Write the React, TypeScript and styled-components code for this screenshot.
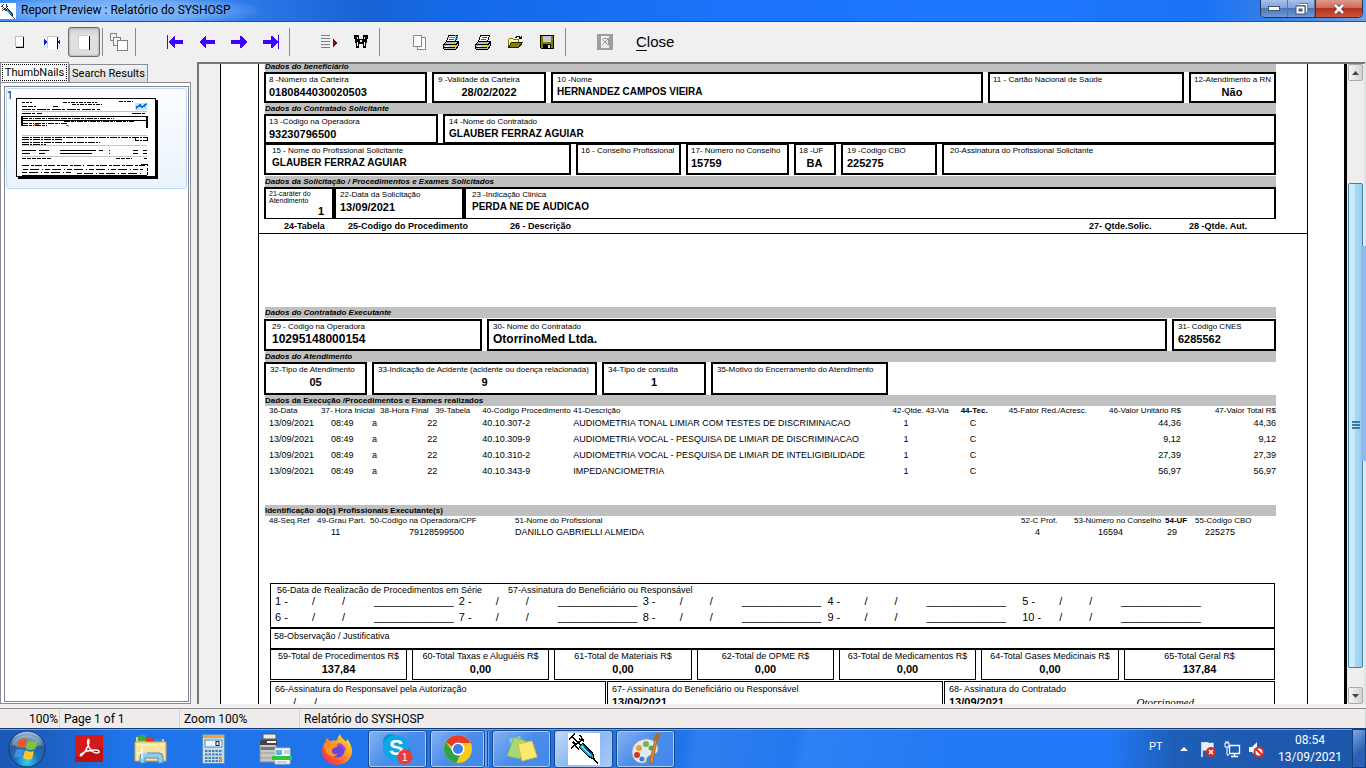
import React from "react";
import styled, { createGlobalStyle, css } from "styled-components";

const ui = `Roboto, "Open Sans", sans-serif`;
const print = `"Liberation Sans", Arial, sans-serif`;

const GlobalStyle = createGlobalStyle`
  * { box-sizing: border-box; }
  body { margin: 0; overflow: hidden; font-family: ${ui}; font-size: 12px; color: #000; }
  button { font-family: inherit; color: inherit; padding: 0; margin: 0; border: 0; background: none; }
  svg { display: block; flex: none; }
`;

/* ---------- window ---------- */

const Desktop = styled.div`
  display: flex;
  flex-direction: column;
  height: 100vh;
  background: #f0f0f0;
`;

const TitleBar = styled.header`
  display: flex;
  flex: none;
  height: 22px;
  background:
    radial-gradient(ellipse 150px 18px at 116px 11px, #8fc0fb 0%, #7db4f9cc 60%, #7db4f900 100%),
    linear-gradient(90deg, #3384f0 0%, #2e7bea 17%, #1763d4 27%, #1569e8 33%, #1b74fb 55%, #1d77fd 75%, #1a72f5 88%, #3f85e4 95%, #6ea0e0 100%);
  border-bottom: 1px solid #24509a;
`;

const AppIcon = styled.span`
  margin-top: 3px;
  width: 16px;
  height: 16px;
  background: #fff;
`;

const WindowTitle = styled.h1`
  flex: 1;
  margin: 0;
  padding-left: 5px;
  font-size: 12px;
  font-weight: 400;
  line-height: 21px;
`;

const Caption = styled.div`
  display: flex;
  height: 18px;
  margin-right: 3px;
  border: 1px solid #1c3563;
  border-top: 0;
  border-radius: 0 0 5px 5px;
  overflow: hidden;
`;

const CaptionButton = styled.button<{ $close?: boolean }>`
  display: flex;
  align-items: center;
  justify-content: center;
  width: ${(p) => (p.$close ? 47 : 27)}px;
  border-left: ${(p) => (p.$close ? 1 : 0)}px solid #1c3563;
  border-right: ${(p) => (p.$close ? 0 : 1)}px solid #5472a5;
  background: ${(p) =>
    p.$close
      ? "linear-gradient(#dd9a8c 0%, #cf6a58 45%, #b5301a 50%, #c9563a 100%)"
      : "linear-gradient(#a8c2e8 0%, #7fa2d6 45%, #4a76b8 50%, #6f9ad4 100%)"};
`;

/* ---------- toolbar ---------- */

const Toolbar = styled.nav`
  display: flex;
  align-items: center;
  flex: none;
  height: 40px;
  padding-left: 4px;
  background: #f0f0f0;
`;

const ToolButton = styled.button<{ $pressed?: boolean }>`
  display: flex;
  align-items: center;
  justify-content: center;
  width: 32px;
  height: 30px;
  ${(p) =>
    p.$pressed &&
    css`
      border: 1px solid #6b6b6b;
      border-radius: 3px;
      background: linear-gradient(#cfcfcf, #e2e2e2 30%, #dcdcdc);
      box-shadow: inset 0 0 2px #777;
    `}
`;

const Divider = styled.span<{ $before?: number; $after?: number }>`
  width: 1px;
  height: 28px;
  margin: 0 ${(p) => p.$after ?? 23}px 0 ${(p) => p.$before ?? 2}px;
  background: #8a8a8a;
`;

const CloseButton = styled.button`
  margin-left: 15px;
  font: 15px/20px ${print};
  u { text-underline-offset: 3px; }
`;

/* ---------- sidebar ---------- */

const Workspace = styled.main`
  display: flex;
  flex: 1;
  min-height: 0;
`;

const Sidebar = styled.aside`
  display: flex;
  flex-direction: column;
  width: 191px;
  margin-right: 6px;
  padding-bottom: 4px;
`;

const Tabs = styled.div`
  display: flex;
  align-items: flex-end;
  height: 20px;
`;

const Tab = styled.button<{ $active?: boolean }>`
  min-width: ${(p) => (p.$active ? 69 : 79)}px;
  height: ${(p) => (p.$active ? 20 : 18)}px;
  padding: 1px;
  border: 1px solid #898c95;
  border-bottom: 0;
  background: ${(p) => (p.$active ? "#fff" : "linear-gradient(#f2f2f2, #dcdcdc)")};
  font-size: 11px;
  line-height: 15px;
  white-space: nowrap;
  span {
    display: block;
    border: 1px dotted #000;
  }
`;

const TabPanel = styled.section`
  display: flex;
  flex: 1;
  padding: 3px 1px 1px 3px;
  border: 1px solid #898c95;
  background: #fff;
`;

const ThumbList = styled.div`
  flex: 1;
  border: 1px solid #828790;
  padding: 1px;
`;

const ThumbItem = styled.button`
  display: flex;
  align-items: flex-start;
  width: 100%;
  height: 101px;
  border: 1px solid #b8d6fb;
  border-radius: 3px;
  background: linear-gradient(#fbfdff, #ebf3fd);
  color: #000;
  font-size: 10px;
  text-align: left;
`;

const ThumbNumber = styled.span`
  width: 9px;
  line-height: 14px;
`;

const ThumbSheet = styled.span`
  margin-top: 9px;
  border: 1px solid #000;
  background: #fff;
  box-shadow: 2px 2px 0 #000;
`;

/* ---------- report viewer ---------- */

const Viewer = styled.section`
  display: flex;
  flex: 1;
  min-width: 0;
  margin-bottom: 4px;
  border-top: 2px solid #777;
  border-left: 2px solid #777;
  border-right: 2px solid #e3e3e3;
  overflow: hidden;
`;

const Paper = styled.article`
  flex: 1;
  min-width: 0;
  margin-left: 21px;
  padding: 0 36px 0 37px;
  border-left: 1px solid #000;
  border-right: 3px solid #000;
  background: #fff;
  overflow: hidden;
  font-family: ${print};
`;

const Frame = styled.div`
  display: flow-root;
  height: 100%;
  border: solid #000;
  border-width: 0 1px;
`;

const RequestPart = styled.section`
  margin-top: -3px;
  padding: 0 31px 0 5px;
  border-bottom: 1px solid #000;
`;

const ExecutionPart = styled.section`
  padding: 73px 31px 0 5px;
`;

const SectionBar = styled.h2<{ $upright?: boolean }>`
  height: 11px;
  margin: 0 0 0 1px;
  background: #c0c0c0;
  font-size: 8px;
  font-weight: 700;
  font-style: ${(p) => (p.$upright ? "normal" : "italic")};
  line-height: 11px;
  white-space: nowrap;
`;

const FieldRow = styled.div<{ $cols: string; $h: number; $gap?: number; $mt?: number; $mb?: number }>`
  display: grid;
  grid-template-columns: ${(p) => p.$cols};
  column-gap: ${(p) => p.$gap ?? 5}px;
  height: ${(p) => p.$h}px;
  margin: ${(p) => p.$mt ?? 0}px 0 ${(p) => p.$mb ?? 0}px;
`;

const FieldBox = styled.div<{ $pad: number; $thinBase?: boolean }>`
  min-width: 0;
  padding: 1px 0 0 ${(p) => p.$pad}px;
  border: 2px solid #000;
  border-bottom-width: ${(p) => (p.$thinBase ? 1 : 2)}px;
  white-space: nowrap;
`;

const FieldLabel = styled.div<{ $small?: boolean }>`
  font-size: ${(p) => (p.$small ? 7 : 8)}px;
  line-height: ${(p) => (p.$small ? 7 : 10)}px;
  white-space: pre;
`;

const FieldValue = styled.div<{ $align?: string; $size?: number }>`
  margin-right: ${(p) => (p.$align === "right" ? 8 : 4)}px;
  font-size: ${(p) => p.$size ?? 11}px;
  font-weight: 700;
  line-height: 14px;
  text-align: ${(p) => p.$align ?? "left"};
`;

type FieldProps = {
  label: string;
  value?: string;
  align?: string;
  size?: number;
  pad?: number;
  small?: boolean;
  thinBase?: boolean;
};

const Field = ({ label, value, align, size, pad = 4, small, thinBase }: FieldProps) => (
  <FieldBox $pad={pad} $thinBase={thinBase}>
    <FieldLabel $small={small}>{label}</FieldLabel>
    {value && (
      <FieldValue $align={align} $size={size}>
        {value}
      </FieldValue>
    )}
  </FieldBox>
);

const ColumnTitles = styled.div`
  display: grid;
  grid-template-columns: 64fr 162fr 579fr 100fr 87fr;
  height: 14px;
  padding-left: 20px;
  font-size: 9px;
  font-weight: 700;
  line-height: 14px;
  white-space: nowrap;
`;

const Grid = styled.table<{ $cols: string; $rowH: number; $headH: number }>`
  display: block;
  padding-left: 5px;
  font-size: 9px;
  tr {
    display: grid;
    grid-template-columns: ${(p) => p.$cols};
    height: ${(p) => p.$rowH}px;
    line-height: ${(p) => p.$rowH}px;
  }
  thead tr {
    height: ${(p) => p.$headH}px;
    line-height: ${(p) => p.$headH}px;
    font-size: 8px;
  }
  thead, tbody { display: block; }
`;

const cell = css<{ $indent?: number; $right?: boolean; $bold?: boolean }>`
  min-width: 0;
  padding: 0 0 0 ${(p) => p.$indent ?? 0}px;
  text-align: ${(p) => (p.$right ? "right" : "left")};
  font-weight: ${(p) => (p.$bold ? 700 : 400)};
  white-space: nowrap;
`;
const Th = styled.th`${cell}`;
const Td = styled.td`${cell}`;

const Lower = styled.div`
  padding: 45px 1px 0 6px;
`;

const SeriesBox = styled.div`
  height: 46px;
  border: solid #000;
  border-width: 1px 1px 2px;
`;

const SeriesTitle = styled.div`
  display: grid;
  grid-template-columns: 231fr 766fr;
  height: 9px;
  padding-left: 6px;
  font-size: 9px;
  line-height: 12px;
  white-space: nowrap;
`;

const SeriesRow = styled.div`
  display: grid;
  grid-template-columns: 184fr 184fr 185fr 195fr 252fr;
  padding-left: 4px;
  font-size: 11px;
  line-height: 16px;
  height: 16px;
`;

const SeriesEntry = styled.div`
  display: grid;
  grid-template-columns: 37px 30px 32px auto;
  white-space: nowrap;
`;

const NoteBox = styled.div`
  height: 21px;
  padding: 1px 3px;
  border: solid #000;
  border-width: 0 1px 2px;
  font-size: 9px;
  line-height: 13px;
`;

const TotalBox = styled.div`
  border: 1px solid #000;
  font-size: 9px;
  line-height: 12px;
  text-align: center;
  white-space: nowrap;
  strong {
    display: block;
    font-size: 11px;
    line-height: 14px;
  }
`;

const SignBox = styled.div`
  padding: 1px 0 0 4px;
  border: 1px solid #000;
  font-size: 9px;
  line-height: 13px;
  white-space: nowrap;
`;

const SignLine = styled.div<{ $slashes?: boolean }>`
  display: flex;
  gap: ${(p) => (p.$slashes ? 18 : 0)}px;
  justify-content: ${(p) => (p.$slashes ? "flex-start" : "space-between")};
  padding-left: ${(p) => (p.$slashes ? 18 : 0)}px;
  padding-right: 80px;
  font-size: 11px;
  line-height: 12px;
  font-weight: ${(p) => (p.$slashes ? 400 : 700)};
  em { font: italic 11px/13px "Liberation Serif", cursive, serif; }
`;

/* ---------- scroll bar ---------- */

const ScrollBar = styled.div`
  display: flex;
  flex-direction: column;
  width: 17px;
  background: #eeeeee;
`;

const ScrollArrow = styled.button`
  display: flex;
  align-items: center;
  justify-content: center;
  height: 17px;
  margin: 0 1px;
  border: 1px solid #a9a9a9;
  border-radius: 2px;
  background: linear-gradient(90deg, #f6f6f6, #d4d4d4);
`;

const ScrollTrack = styled.div`
  display: grid;
  grid-template-rows: 102fr 484fr 19fr;
  flex: 1;
`;

const ScrollThumb = styled.div`
  grid-row: 2;
  display: flex;
  align-items: center;
  justify-content: center;
  margin: 0 1px;
  border: 1px solid #3c7fb1;
  border-radius: 2px;
  background: linear-gradient(90deg, #d5effc 0%, #c4e8fa 45%, #a6d9f4 50%, #98cfee 100%);
`;

const EdgeHandle = styled.div`
  position: absolute;
  right: 0;
  top: 32%;
  width: 5px;
  height: 28%;
  background: #8fb8ee;
`;

/* ---------- status bar and taskbar ---------- */

const StatusBar = styled.footer`
  display: grid;
  grid-template-columns: 60px 120px 120px 1fr;
  flex: none;
  height: 20px;
  border-top: 1px solid #8c8c8c;
  background: #f0ecec;
  line-height: 20px;
`;

const StatusCell = styled.span<{ $right?: boolean }>`
  padding: 0 1px 0 4px;
  border-right: 1px solid #d5d2d2;
  text-align: ${(p) => (p.$right ? "right" : "left")};
  white-space: nowrap;
  overflow: hidden;
`;

const TaskBar = styled.footer`
  display: flex;
  flex: none;
  height: 40px;
  border-top: 1px solid #123a7a;
  box-shadow: inset 0 1px 0 #6ba4f3;
  background:
    linear-gradient(90deg, #1a58b4 0%, #1d61c4 4%, #277ceb00 9%, #277ceb00 81%, #1f5eb6 86%, #1b56a8 100%),
    linear-gradient(100deg, #2074ea 0 50%, #2f80ee 51%, #2478ef 58%, #2f82f4 59%, #2379f5 70%, #1f7bff 100%);
`;

const StartButton = styled.button`
  width: 58px;
  padding-left: 8px;
`;

const QuickButton = styled.button`
  display: flex;
  align-items: center;
  justify-content: center;
  width: 62px;
`;

const TaskButton = styled.button<{ $on?: boolean; $stack?: boolean }>`
  display: flex;
  align-items: center;
  justify-content: center;
  width: ${(p) => (p.$stack ? 55 : 59)}px;
  height: 38px;
  margin: 1px ${(p) => (p.$stack ? 7 : 3)}px 0 0;
  border: 1px solid #174a93;
  border-radius: 3px;
  background: ${(p) =>
    p.$on
      ? "linear-gradient(135deg, #c5daf8, #8db7f3 50%, #a6c9f8)"
      : "linear-gradient(135deg, #86b2f2, #4a8deb 50%, #4288ec)"};
  box-shadow: inset 0 0 0 1px #a9c9f6${(p) => (p.$stack ? ", 2px 0 0 #6ba1ec, 3px 0 0 #174a93, 4px 0 0 #6ba1ec" : "")};
`;

const AppIconLarge = styled.span`
  background: #fff;
`;

const Tray = styled.div`
  display: flex;
  align-items: center;
  margin-left: auto;
  color: #fff;
`;

const Language = styled.button`
  width: 23px;
  padding-bottom: 5px;
  font-size: 11px;
  text-align: left;
`;

const TrayButton = styled.button`
  display: flex;
  justify-content: center;
  width: 24px;
  padding-top: 1px;
`;

const Clock = styled.button`
  width: 68px;
  margin-left: 8px;
  font: 12px/17px ${ui};
  text-align: center;
  white-space: nowrap;
  color: #fff;
`;

const ShowDesktop = styled.button`
  align-self: stretch;
  width: 14px;
  margin-left: 8px;
  border: 1px solid #123f80;
  background: linear-gradient(135deg, #7fa8dd, #2a61b3 60%);
`;

/* ---------- drawings ---------- */

const Syringe = ({ s }: { s: number }) => (
  <svg width={s} height={s} viewBox="0 0 32 32" shapeRendering="crispEdges">
    <path d="M1 6l6-5M4 3l10 11M3 15l12-9M8 12l-3-3M15 7l-3-5M7 13l4 3M11 6l5 2" stroke="#000" strokeWidth="1.500" fill="none" />
    <path d="M11 14l4-4 10 11 1 5-5-2z" fill="#12a5b0" stroke="#000" strokeWidth="1.300" />
    <path d="M14 13l8 9" stroke="#5ef0ea" strokeWidth="1.500" />
    <path d="M17 14l6 7" stroke="#1b37b8" strokeWidth="1.500" />
    <path d="M25 25l5 6" stroke="#000" strokeWidth="1.300" />
  </svg>
);

const Arrow = ({ left, stop }: { left?: boolean; stop?: boolean }) => (
  <svg width="16" height="14" viewBox="0 0 16 14" shapeRendering="crispEdges">
    <g fill="#4000ff" transform={left ? undefined : "matrix(-1 0 0 1 16 0)"}>
      {stop && <rect x="0" y="0" width="1" height="14" />}
      <path d={stop ? "M1 7L7 1h1v4h8v4H8v4H7z" : "M0 7L6 1h1v4h9v4H7v4H6z"} />
    </g>
  </svg>
);

const SmallDoc = () => (
  <svg width="10" height="12" viewBox="0 0 10 12" shapeRendering="crispEdges">
    <path d="M.5 .5h8v10h-8z" fill="#fff" stroke="#c0c0c0" />
    <path d="M8 1h1v11H1v-1h7z" fill="#000" />
  </svg>
);

const WideDoc = () => (
  <svg width="16" height="14" viewBox="0 0 16 14" shapeRendering="crispEdges">
    <path d="M3 1h10v13H3z" fill="#fff" />
    <path d="M3 1.500h10M3.500 1v12" stroke="#c8c8c8" />
    <path d="M13 2h1v12h-1z" fill="#000" />
    <path d="M0 4l3 3-3 3zM16 4l-3 3 3 3z" fill="#0020f0" />
  </svg>
);

const FullDoc = () => (
  <svg width="12" height="15" viewBox="0 0 12 15" shapeRendering="crispEdges">
    <path d="M0 0h11v14H0z" fill="#fff" />
    <path d="M0 .5h10M.5 0v14" stroke="#cdcdcd" />
    <path d="M11 1h1v14h-1z" fill="#000" />
  </svg>
);

const Cascade = () => (
  <svg width="18" height="18" viewBox="0 0 18 18" shapeRendering="crispEdges" fill="#f4f4f4" stroke="#808080">
    <path d="M.5 .5h6v7h-6z" />
    <path d="M3.500 4.500h7v8h-7z" />
    <path d="M7.500 7.500h10v10h-10z" fill="#fff" />
  </svg>
);

const GotoList = () => (
  <svg width="16" height="14" viewBox="0 0 16 14" shapeRendering="crispEdges">
    <path d="M0 .5h9M0 3.500h9M0 6.500h9M0 9.500h9M0 12.500h9" stroke="#7d7d7d" />
    <path d="M12 4l4 4-4 4z" fill="#8b0000" />
  </svg>
);

const Binoculars = () => (
  <svg width="14" height="14" viewBox="0 0 14 14" shapeRendering="crispEdges" fill="#000">
    <path d="M0 0h5v4h4V0h5v4h-1v4h-1v5H9V9H5v4H2V8H1V4H0z" />
    <path d="M6 5h2v2H6zM3 2h1v2H3zM10 2h1v2h-1zM3 7h1v4H3zM10 7h1v4h-1z" fill="#e8e8e8" />
  </svg>
);

const Copies = () => (
  <svg width="13" height="15" viewBox="0 0 13 15" shapeRendering="crispEdges" fill="#fff" stroke="#8a8a8a">
    <path d="M4.500 2.500h8v12h-8z" />
    <path d="M.5 .5h8v11h-8z" />
  </svg>
);

const Printer = ({ setup }: { setup?: boolean }) => (
  <svg width="17" height="15" viewBox="0 0 17 15" shapeRendering="crispEdges">
    <path d="M5.500 .5h9l-2 6h-9z" fill="#fff" stroke="#000" />
    <path d="M7 2.500h5M6 4.500h5" stroke="#555" />
    <path d="M3.500 6.500h12v4l-3 4h-11l-1-1v-4z" fill="#b8b8b8" stroke="#000" />
    <path d="M1 9.500h12l2-2M1 12.500h11" stroke="#000" fill="none" />
    <path d="M8 11h4" stroke="#e5df00" strokeWidth="1.500" />
    <path d="M2 11h5" stroke="#fff" />
    {setup && <path d="M4 2.500h8M12 1l3 1M12 4l3-1" stroke="#00b8c8" strokeWidth="1.500" />}
  </svg>
);

const OpenFolder = () => (
  <svg width="15" height="14" viewBox="0 0 15 14" shapeRendering="crispEdges">
    <path d="M.5 12.500v-8l1-1h3l1 1h5v3" fill="#ffffa0" stroke="#7a7a00" />
    <path d="M.5 12.500l3-5h11l-4 5z" fill="#808000" stroke="#202000" />
    <path d="M7 2.500h1l1-1h2l2 2M13.500 1v3M11 3.500h3" stroke="#000" fill="none" />
  </svg>
);

const Floppy = () => (
  <svg width="14" height="14" viewBox="0 0 14 14" shapeRendering="crispEdges">
    <path d="M.5 .5h13v13h-12l-1-1z" fill="#808000" stroke="#000" />
    <path d="M3 1h8v6H3z" fill="#c8c8c8" />
    <path d="M3 9h8v5H3z" fill="#000" />
    <path d="M8 10h2v3H8z" fill="#e0e0e0" />
  </svg>
);

const Excel = () => (
  <svg width="16" height="16" viewBox="0 0 16 16" shapeRendering="crispEdges">
    <path d="M0 0h16v16H0z" fill="#9d9d9d" />
    <path d="M4 2h8v12H4z" fill="#efefef" />
    <path d="M5 5l6 6M11 5l-6 6M6 4h5v7" stroke="#9a9a9a" fill="none" />
  </svg>
);

const Thumbnail = () => (
  <svg width="138" height="77" viewBox="0 0 138 77" shapeRendering="crispEdges" fill="none" stroke="#000">
    <path d="M5 3.500h10" strokeDasharray="3 1" />
    <path d="M46 3.500h34M102 2.500h14M55 5.500h30" strokeDasharray="4 1 2 1" />
    <path d="M118 4h12v7h-12z" fill="#bfe0ff" stroke="none" />
    <path d="M119 9l4-3 2 2 5-3" stroke="#1677d8" strokeWidth="2" />
    <path d="M5 7.500h14M36 7.500h6" strokeDasharray="5 1" />
    <path d="M5 10.500h78M40 12.500h41M115 14.500h15M5 14.500h20" strokeDasharray="9 1 3 2" strokeWidth="1" />
    <path d="M5 12.500h125M5 46.500h125M5 36.500h125M5 57.500h125" stroke="#c4c4c4" />
    <path d="M5 17.500h125v11M5 21.500h125M5 27v-10" strokeWidth="1.500" />
    <path d="M5 19.500h92M47 22.500h70M5 24.500h45M5 26.500h26" strokeDasharray="6 1 3 1 1 1" />
    <path d="M17 25.500h5M49 26.500h3" stroke="#d95a15" />
    <path d="M5 38.500h125v3M118 38v3h12M5 40.500h40M5 43.500h78M5 45.500h24" strokeDasharray="7 1 2 1" />
    <path d="M5 51.500h14M22 51.500h10M43 51.500h36M82 51.500h4M92 51.500h1M116 51.500h5M126 51.500h4M5 54.500h8M22 54.500h6M43 54.500h32M92 54.500h1M116 54.500h5M126 54.500h4" />
    <path d="M5 59.500h30M99 59.500h16M127 59.500h3" strokeDasharray="4 1" />
    <path d="M5 66.500h62M70 66.500h58M124 65.500h6v10" strokeDasharray="7 2 3 1" />
    <path d="M6 70.500h120M5 73.500h50M60 74.500h65" strokeDasharray="5 2 9 3 1 2" />
    <path d="M5 76.500h125" />
  </svg>
);

const StartOrb = () => (
  <svg width="38" height="38" viewBox="0 0 38 38">
    <defs>
      <radialGradient id="orb" cx="50%" cy="85%" r="80%">
        <stop offset="0" stopColor="#35d4f2" />
        <stop offset=".4" stopColor="#1d72b4" />
        <stop offset=".75" stopColor="#2c5a94" />
        <stop offset="1" stopColor="#9dbbd8" />
      </radialGradient>
    </defs>
    <circle cx="19" cy="19" r="18" fill="url(#orb)" stroke="#113a70" />
    <path d="M4 15a15.500 13 0 0 1 30 0q-15 6-30 0z" fill="#fff" opacity=".3" />
    <path d="M11 10q4-3 8-1l-2 9q-4-2-8 0z" fill="#e8592b" />
    <path d="M20 10q4 3 10 0l-3 9q-4 2-9 0z" fill="#86bf3a" />
    <path d="M8 20q4-2 8 0l-2 8q-4-2-8 0z" fill="#3a94e0" />
    <path d="M17 20q5 3 9 1l-2 8q-5 2-9-1z" fill="#fcc52c" />
  </svg>
);

const Acrobat = () => (
  <svg width="28" height="27" viewBox="0 0 28 27">
    <rect width="28" height="27" fill="#c11010" />
    <path d="M0 0h28v12L0 22z" fill="#d41a1a" />
    <path d="M13 5c-1 2 0 5 1 7 2 4 5 6 8 6 3 0 3-3-1-3-5 0-10 1-13 3-4 2-3 4-1 2 3-3 6-8 7-13 0-3-1-3-1-2z" fill="none" stroke="#fff" strokeWidth="1.500" />
  </svg>
);

const Explorer = () => (
  <svg width="34" height="30" viewBox="0 0 34 30">
    <path d="M2 3h10l2 2h16v22H2z" fill="#eccb6c" />
    <path d="M4 1h8v6H4z" fill="#3fa845" /><path d="M12 3h8v6h-8z" fill="#d23a2a" /><path d="M20 5h8v6h-8z" fill="#3a80c8" />
    <path d="M1 8h31v19H1z" fill="#f8e4a0" stroke="#cda84c" />
    <path d="M3 11h27" stroke="#fff8d8" />
    <path d="M6 29v-6q0-4 4-4h15q4 0 4 4v6h-5v-5H11v5z" fill="#92cdee" stroke="#4b8fbe" />
    <path d="M8 14v11M3 19h10" stroke="#fff" strokeWidth="1.200" />
  </svg>
);

const Calculator = () => (
  <svg width="23" height="30" viewBox="0 0 23 30">
    <rect x=".5" y=".5" width="22" height="29" rx="1" fill="#c4dcf0" stroke="#5b92c4" />
    <rect x="1" y="1" width="21" height="3" fill="#f0a040" />
    <rect x="3" y="6" width="17" height="7" fill="#e9f3fb" stroke="#628db2" />
    <rect x="14" y="7.500" width="3" height="4" fill="none" stroke="#222" />
    <path d="M3 17h17M3 20.500h17M3 24h17M3 27h17" stroke="#4b7fae" strokeWidth="2" strokeDasharray="2.500 1" />
    <path d="M19 23v5" stroke="#ee8b22" strokeWidth="2.500" />
  </svg>
);

const Scanner = () => (
  <svg width="33" height="32" viewBox="0 0 33 32">
    <path d="M1 8h16v21H1z" fill="#c8c8c8" stroke="#888" />
    <path d="M4 1h13v5H4z" fill="#ececec" stroke="#555" />
    <path d="M1 7h17v5H1z" fill="#454545" /><path d="M8 8h9v2H8z" fill="#fff" />
    <path d="M2 14h14v3H2z" fill="#777" /><path d="M1 20h16M1 25h16" stroke="#999" />
    <path d="M16 15h15v16H16z" fill="#fff" stroke="#bbb" />
    <path d="M17 17h6v5h-6z" fill="#6aace6" /><path d="M25 18h5M25 20h5" stroke="#8ab" />
    <path d="M13 23h20v4H13z" fill="#2cc93c" />
    <path d="M18 29h10" stroke="#99a" />
  </svg>
);

const Firefox = () => (
  <svg width="32" height="32" viewBox="0 0 32 32">
    <defs>
      <linearGradient id="fx" x1="1" y1="0" x2="0" y2="1">
        <stop offset="0" stopColor="#fff04a" />
        <stop offset=".35" stopColor="#ffae22" />
        <stop offset=".7" stopColor="#ff5238" />
        <stop offset="1" stopColor="#e81b78" />
      </linearGradient>
    </defs>
    <path d="M19 1c1 4 4 5 6 8l1-3c4 5 5 9 5 12a15 14 0 0 1-30 0c0-5 2-8 4-10V5l4 3c4-1 6 0 7-1 1-2 1-4 3-6z" fill="url(#fx)" />
    <circle cx="17" cy="18" r="6.500" fill="#6b46d8" />
    <path d="M5 10c5-1 9 1 12 3-2 2-5 1-6 4s2 5 6 4c-3 4-10 3-12-2s-2-6 0-9z" fill="#ff9520" />
    <path d="M17 11c4 0 7 3 7 7" stroke="#b34ad8" strokeWidth="2" fill="none" />
  </svg>
);

const SkypeLetter = styled.text`
  font: 700 22px ${print};
  fill: #fff;
`;
const BadgeDigit = styled.text`
  font: 10px ${print};
  fill: #fff;
`;

const Skype = () => (
  <svg width="32" height="32" viewBox="0 0 32 32">
    <circle cx="9" cy="9" r="8" fill="#0c8fd6" /><circle cx="21" cy="20" r="8" fill="#0b7dc4" />
    <circle cx="14" cy="15" r="13" fill="#10a5e6" />
    <SkypeLetter x="7" y="22">S</SkypeLetter>
    <circle cx="23" cy="24" r="7.500" fill="#f03a35" />
    <BadgeDigit x="20" y="28">1</BadgeDigit>
  </svg>
);

const Chrome = () => (
  <svg width="30" height="30" viewBox="0 0 30 30">
    <circle cx="15" cy="15" r="14" fill="#fbc916" />
    <path d="M2.900 8A14 14 0 0 1 27.500 9H15a6 6 0 0 0-5.500 4z" fill="#e33b2e" />
    <path d="M2.900 8l7 10a6 6 0 0 0 7 3l-3.500 8A14 14 0 0 1 2.900 8z" fill="#2da24c" />
    <circle cx="15" cy="15" r="6.500" fill="#fff" /><circle cx="15" cy="15" r="5" fill="#3f80ea" />
  </svg>
);

const Notes = () => (
  <svg width="32" height="28" viewBox="0 0 32 28">
    <path d="M3 4l11-3 5 18-10 3z" fill="#8ccfe0" />
    <path d="M1 21L8 2l12 4-6 18z" fill="#a8d878" stroke="#80b858" />
    <path d="M12 9l14-3 5 16-15 4z" fill="#fbe96e" stroke="#d8c144" />
  </svg>
);

const Paint = () => (
  <svg width="32" height="32" viewBox="0 0 32 32">
    <path d="M15 6C6 7 1 14 2 21s7 10 12 9c4-1 1-5 5-7s9-1 9-7S22 5 15 6z" fill="#e3e9f0" stroke="#8d9cad" />
    <circle cx="9" cy="15" r="3" fill="#e8a33b" /><circle cx="16" cy="11" r="3" fill="#72b84a" />
    <circle cx="7" cy="22" r="3" fill="#d7332b" /><circle cx="12" cy="26" r="2.500" fill="#3a7fd4" />
    <circle cx="21" cy="15" r="2.500" fill="#5aa84a" />
    <path d="M25 6l2 1-4 22-3 2v-4z" fill="#d98a35" stroke="#9a5717" strokeWidth=".7" />
    <path d="M23 6l4-6 4 1-3 7z" fill="#ab6a3c" />
  </svg>
);

const TrayFlag = () => (
  <svg width="17" height="17" viewBox="0 0 17 17">
    <path d="M2 1v15" stroke="#fff" strokeWidth="1.500" /><path d="M3 2q3-1 5 0t5 0v7H3z" fill="#e8eef6" stroke="#fff" />
    <circle cx="11" cy="11" r="5" fill="#d8291e" /><path d="M9 9l4 4M13 9l-4 4" stroke="#fff" strokeWidth="1.500" />
  </svg>
);
const TrayNetwork = () => (
  <svg width="17" height="17" viewBox="0 0 17 17" fill="none" stroke="#fff">
    <path d="M5.500 4.500h10v8h-10zM10.500 13v2M7 15.500h7" strokeWidth="1.300" /><path d="M1 2h4v4H1zM3 6v8h2M2 0v2M4 0v2" />
  </svg>
);
const TraySound = () => (
  <svg width="17" height="17" viewBox="0 0 17 17">
    <path d="M1 6h3l5-5v15l-5-5H1z" fill="#f2f6fb" /><circle cx="11" cy="11" r="4.500" fill="#fff" stroke="#d8291e" strokeWidth="2" />
    <path d="M8 8l6 6" stroke="#d8291e" strokeWidth="2" />
  </svg>
);

/* ---------- data ---------- */

const procedures = [
  ["40.10.307-2", "AUDIOMETRIA TONAL LIMIAR COM TESTES DE DISCRIMINACAO", "44,36"],
  ["40.10.309-9", "AUDIOMETRIA VOCAL - PESQUISA DE LIMIAR DE DISCRIMINACAO", "9,12"],
  ["40.10.310-2", "AUDIOMETRIA VOCAL - PESQUISA DE LIMIAR DE INTELIGIBILIDADE", "27,39"],
  ["40.10.343-9", "IMPEDANCIOMETRIA", "56,97"],
];

const totals = [
  ["59-Total de Procedimentos R$", "137,84"],
  ["60-Total Taxas e Aluguéis R$", "0,00"],
  ["61-Total de Materiais R$", "0,00"],
  ["62-Total de OPME R$", "0,00"],
  ["63-Total de Medicamentos R$", "0,00"],
  ["64-Total Gases Medicinais R$", "0,00"],
  ["65-Total Geral R$", "137,84"],
];

const Series = ({ from }: { from: number }) => (
  <SeriesRow>
    {[0, 1, 2, 3, 4].map((i) => (
      <SeriesEntry key={i}>
        <span>{from + i} -</span>
        <span>/</span>
        <span>/</span>
        <span>_____________</span>
      </SeriesEntry>
    ))}
  </SeriesRow>
);

export default function App() {
  return (
    <Desktop>
      <GlobalStyle />
      <TitleBar>
        <AppIcon><Syringe s={16} /></AppIcon>
        <WindowTitle>Report Preview : Relatório do SYSHOSP</WindowTitle>
        <Caption>
          <CaptionButton aria-label="Minimize">
            <svg width="12" height="5" viewBox="0 0 12 5"><rect x=".5" y=".5" width="11" height="4" fill="#fff" stroke="#44546e" /></svg>
          </CaptionButton>
          <CaptionButton aria-label="Restore">
            <svg width="13" height="12" viewBox="0 0 13 12" fill="none">
              <path d="M4 1.500h7.500v7.500" stroke="#44546e" strokeWidth="3" /><path d="M4 1.500h7.500v7.500" stroke="#fff" strokeWidth="1.500" />
              <path d="M2.500 4.500h6v5h-6z" stroke="#44546e" strokeWidth="4" /><path d="M2.500 4.500h6v5h-6z" stroke="#fff" strokeWidth="2" />
            </svg>
          </CaptionButton>
          <CaptionButton $close aria-label="Close window">
            <svg width="12" height="10" viewBox="0 0 12 10">
              <path d="M2 1l8 8M10 1L2 9" stroke="#4a3a44" strokeWidth="4" /><path d="M2 1l8 8M10 1L2 9" stroke="#fff" strokeWidth="2.500" />
            </svg>
          </CaptionButton>
        </Caption>
      </TitleBar>

      <Toolbar>
        <ToolButton aria-label="Whole page"><SmallDoc /></ToolButton>
        <ToolButton aria-label="Page width"><WideDoc /></ToolButton>
        <ToolButton $pressed aria-label="100%"><FullDoc /></ToolButton>
        <Divider $after={0} />
        <ToolButton aria-label="Thumbnails"><Cascade /></ToolButton>
        <Divider $before={0} />
        <ToolButton aria-label="First page"><Arrow left stop /></ToolButton>
        <ToolButton aria-label="Previous page"><Arrow left /></ToolButton>
        <ToolButton aria-label="Next page"><Arrow /></ToolButton>
        <ToolButton aria-label="Last page"><Arrow stop /></ToolButton>
        <Divider />
        <ToolButton aria-label="Go to page"><GotoList /></ToolButton>
        <ToolButton aria-label="Find"><Binoculars /></ToolButton>
        <Divider />
        <ToolButton aria-label="Copy"><Copies /></ToolButton>
        <ToolButton aria-label="Printer setup"><Printer setup /></ToolButton>
        <ToolButton aria-label="Print"><Printer /></ToolButton>
        <ToolButton aria-label="Open"><OpenFolder /></ToolButton>
        <ToolButton aria-label="Save"><Floppy /></ToolButton>
        <Divider />
        <ToolButton aria-label="Export"><Excel /></ToolButton>
        <CloseButton><u>C</u>lose</CloseButton>
      </Toolbar>

      <Workspace>
        <Sidebar>
          <Tabs role="tablist">
            <Tab $active role="tab"><span>ThumbNails</span></Tab>
            <Tab role="tab">Search Results</Tab>
          </Tabs>
          <TabPanel>
            <ThumbList>
              <ThumbItem>
                <ThumbNumber>1</ThumbNumber>
                <ThumbSheet><Thumbnail /></ThumbSheet>
              </ThumbItem>
            </ThumbList>
          </TabPanel>
        </Sidebar>

        <Viewer>
          <Paper>
            <Frame>
              <RequestPart>
                <SectionBar>Dados do beneficiário</SectionBar>
                <FieldRow $cols="163fr 114fr 432fr 196fr 87fr" $h={31}>
                  <Field label="8 -Número da Carteira" value="0180844030020503" pad={3} />
                  <Field label="9 -Validade da Carteira" value="28/02/2022" align="center" />
                  <Field label="10 -Nome" value="HERNANDEZ CAMPOS VIEIRA" size={10} />
                  <Field label="11 - Cartão Nacional de Saúde" pad={3} />
                  <Field label="12-Atendimento a RN" value="Não" align="center" pad={3} />
                </FieldRow>
                <SectionBar>Dados do Contratado Solicitante</SectionBar>
                <FieldRow $cols="174fr 833fr" $h={30}>
                  <Field label="13 -Código na Operadora" value="93230796500" pad={3} />
                  <Field label="14 -Nome do Contratado" value="GLAUBER FERRAZ AGUIAR" size={10} />
                </FieldRow>
                <FieldRow $cols="307fr 105fr 103fr 42fr 96fr 334fr" $h={32} $mt={-1} $mb={1}>
                  <Field label="15 - Nome do Profissional Solicitante" value="GLAUBER FERRAZ AGUIAR" size={10} pad={6} />
                  <Field label="16 - Conselho Profissional" pad={3} />
                  <Field label="17- Número no Conselho" value="15759" pad={3} />
                  <Field label="18 -UF" value="BA" align="center" pad={3} />
                  <Field label="19 -Código CBO" value="225275" />
                  <Field label="20-Assinatura do Profissional Solicitante" pad={6} />
                </FieldRow>
                <SectionBar>Dados da Solicitação / Procedimentos e Exames Solicitados</SectionBar>
                <FieldRow $cols="70fr 130fr 812fr" $h={32} $gap={0}>
                  <Field label={"21-caráter do\nAtendimento"} value="1" align="right" pad={3} small thinBase />
                  <Field label="22-Data da Solicitação" value="13/09/2021" thinBase />
                  <Field label="23 -Indicação Clinica" value="PERDA NE DE AUDICAO" size={10} pad={6} thinBase />
                </FieldRow>
                <ColumnTitles>
                  <span>24-Tabela</span>
                  <span>25-Codigo do Procedimento</span>
                  <span>26 - Descrição</span>
                  <span>27- Qtde.Solic.</span>
                  <span>28 -Qtde. Aut.</span>
                </ColumnTitles>
              </RequestPart>

              <ExecutionPart>
                <SectionBar>Dados do Contratado Executante</SectionBar>
                <FieldRow $cols="218fr 680fr 104fr" $h={32} $mt={1}>
                  <Field label="29 - Código na Operadora" value="10295148000154" size={12} pad={6} />
                  <Field label="30- Nome do Contratado" value="OtorrinoMed Ltda." size={12} />
                  <Field label="31- Código CNES" value="6285562" />
                </FieldRow>
                <SectionBar>Dados do Atendimento</SectionBar>
                <FieldRow $cols="103fr 225fr 104fr 177fr 383fr" $h={33}>
                  <Field label="32-Tipo de Atendimento" value="05" align="center" />
                  <Field label="33-Indicação de Acidente (acidente ou doença relacionada)" value="9" align="center" />
                  <Field label="34-Tipo de consulta" value="1" align="center" />
                  <Field label="35-Motivo do Encerramento do Atendimento" />
                </FieldRow>
                <SectionBar $upright>Dados da Execução /Procedimentos e Exames realizados</SectionBar>
                <Grid $cols="52fr 51fr 55fr 55fr 91fr 319fr 33fr 35fr 48fr 90fr 82fr 95fr" $rowH={16} $headH={9}>
                  <thead>
                    <tr>
                      <Th>36-Data</Th>
                      <Th>37- Hora Inicial</Th>
                      <Th $indent={8}>38-Hora Final</Th>
                      <Th $indent={8}>39-Tabela</Th>
                      <Th>40-Código Procedimento</Th>
                      <Th>41-Descrição</Th>
                      <Th>42-Qtde.</Th>
                      <Th>43-Via</Th>
                      <Th $bold>44-Tec.</Th>
                      <Th>45-Fator Red./Acresc.</Th>
                      <Th $right>46-Valor Unitário R$</Th>
                      <Th $right>47-Valor Total R$</Th>
                    </tr>
                  </thead>
                  <tbody>
                    {procedures.map(([code, text, price]) => (
                      <tr key={code}>
                        <Td>13/09/2021</Td>
                        <Td $indent={10}>08:49</Td>
                        <Td>a</Td>
                        <Td>22</Td>
                        <Td>{code}</Td>
                        <Td>{text}</Td>
                        <Td $indent={11}>1</Td>
                        <Td />
                        <Td $indent={9}>C</Td>
                        <Td />
                        <Td $right>{price}</Td>
                        <Td $right>{price}</Td>
                      </tr>
                    ))}
                  </tbody>
                </Grid>
                <FieldRow $cols="1fr" $h={11} $mt={26}>
                  <SectionBar $upright>Identificação do(s) Profissionais Executante(s)</SectionBar>
                </FieldRow>
                <Grid $cols="48fr 53fr 145fr 506fr 53fr 91fr 30fr 81fr" $rowH={12} $headH={10}>
                  <thead>
                    <tr>
                      <Th>48-Seq.Ref</Th>
                      <Th>49-Grau Part.</Th>
                      <Th>50-Código na Operadora/CPF</Th>
                      <Th>51-Nome do Profissional</Th>
                      <Th>52-C Prof.</Th>
                      <Th>53-Número no Conselho</Th>
                      <Th $bold>54-UF</Th>
                      <Th>55-Código CBO</Th>
                    </tr>
                  </thead>
                  <tbody>
                    <tr>
                      <Td />
                      <Td $indent={14}>11</Td>
                      <Td $indent={39}>79128599500</Td>
                      <Td>DANILLO GABRIELLI ALMEIDA</Td>
                      <Td $indent={14}>4</Td>
                      <Td $indent={24}>16594</Td>
                      <Td $indent={2}>29</Td>
                      <Td $indent={10}>225275</Td>
                    </tr>
                  </tbody>
                </Grid>
                <Lower>
                  <SeriesBox>
                    <SeriesTitle>
                      <span>56-Data de Realizacão de Procedimentos em Série</span>
                      <span>57-Assinatura do Beneficiário ou Responsável</span>
                    </SeriesTitle>
                    <Series from={1} />
                    <Series from={6} />
                  </SeriesBox>
                  <NoteBox>58-Observação / Justificativa</NoteBox>
                  <FieldRow $cols="137fr 137fr 138fr 137fr 137fr 138fr 151fr" $h={31} $mt={-1} $mb={1}>
                    {totals.map(([label, value]) => (
                      <TotalBox key={label}>
                        {label}
                        <strong>{value}</strong>
                      </TotalBox>
                    ))}
                  </FieldRow>
                  <FieldRow $cols="336fr 336fr 331fr" $h={60} $gap={1}>
                    <SignBox>
                      66-Assinatura do Responsavel pela Autorização
                      <SignLine $slashes><span>/</span><span>/</span></SignLine>
                    </SignBox>
                    <SignBox>
                      67- Assinatura do Beneficiário ou Responsável
                      <SignLine>13/09/2021</SignLine>
                    </SignBox>
                    <SignBox>
                      68- Assinatura do Contratado
                      <SignLine><span>13/09/2021</span><em>Otorrinomed</em></SignLine>
                    </SignBox>
                  </FieldRow>
                </Lower>
              </ExecutionPart>
            </Frame>
          </Paper>
          <ScrollBar>
            <ScrollArrow aria-label="Scroll up">
              <svg width="7" height="4" viewBox="0 0 7 4"><path d="M0 4l3.500-4L7 4z" fill="#444" /></svg>
            </ScrollArrow>
            <ScrollTrack>
              <ScrollThumb>
                <svg width="8" height="9" viewBox="0 0 8 9" shapeRendering="crispEdges">
                  <path d="M0 1h8M0 4h8M0 7h8" stroke="#3a7ca8" strokeWidth="2" />
                </svg>
              </ScrollThumb>
            </ScrollTrack>
            <ScrollArrow aria-label="Scroll down">
              <svg width="7" height="4" viewBox="0 0 7 4"><path d="M0 0l3.500 4L7 0z" fill="#444" /></svg>
            </ScrollArrow>
          </ScrollBar>
        </Viewer>
      </Workspace>

      <StatusBar>
        <StatusCell $right>100%</StatusCell>
        <StatusCell>Page 1 of 1</StatusCell>
        <StatusCell>Zoom 100%</StatusCell>
        <StatusCell>Relatório do SYSHOSP</StatusCell>
      </StatusBar>

      <TaskBar>
        <StartButton aria-label="Start"><StartOrb /></StartButton>
        <QuickButton aria-label="Acrobat Reader"><Acrobat /></QuickButton>
        <QuickButton aria-label="Explorer"><Explorer /></QuickButton>
        <QuickButton aria-label="Calculator"><Calculator /></QuickButton>
        <QuickButton aria-label="Scanner"><Scanner /></QuickButton>
        <QuickButton aria-label="Firefox"><Firefox /></QuickButton>
        <TaskButton aria-label="Skype"><Skype /></TaskButton>
        <TaskButton $stack aria-label="Chrome"><Chrome /></TaskButton>
        <TaskButton aria-label="Sticky Notes"><Notes /></TaskButton>
        <TaskButton $on aria-label="SYSHOSP"><AppIconLarge><Syringe s={32} /></AppIconLarge></TaskButton>
        <TaskButton aria-label="Paint"><Paint /></TaskButton>
        <Tray>
          <Language>PT</Language>
          <TrayButton aria-label="Show hidden icons">
            <svg width="8" height="4" viewBox="0 0 8 4"><path d="M0 4l4-4 4 4z" fill="#fff" /></svg>
          </TrayButton>
          <TrayButton aria-label="Action Center"><TrayFlag /></TrayButton>
          <TrayButton aria-label="Network"><TrayNetwork /></TrayButton>
          <TrayButton aria-label="Volume"><TraySound /></TrayButton>
          <Clock>
            08:54
            <br />
            13/09/2021
          </Clock>
          <ShowDesktop aria-label="Show desktop" />
        </Tray>
      </TaskBar>
      <EdgeHandle />
    </Desktop>
  );
}
